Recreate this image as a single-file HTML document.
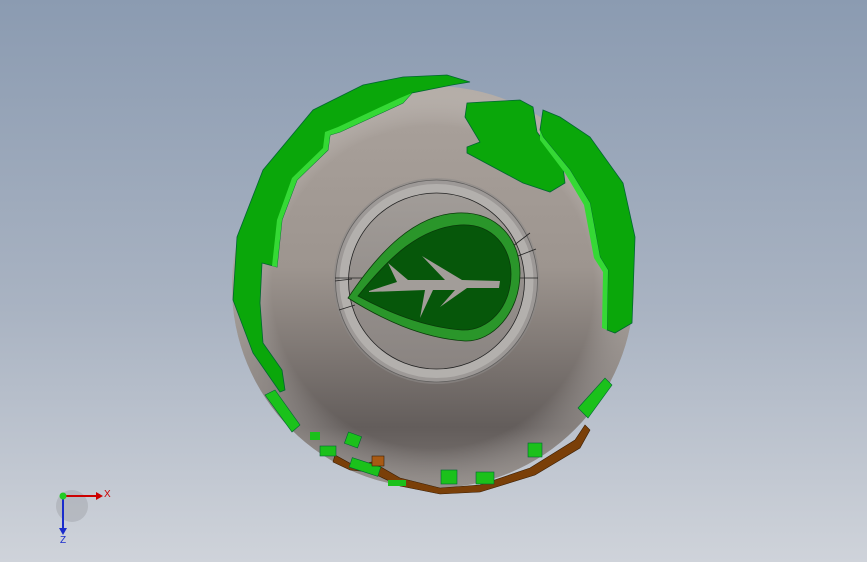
<!DOCTYPE html>
<html><head><style>
html,body{margin:0;padding:0;width:867px;height:562px;overflow:hidden}
body{background:linear-gradient(#8b9bb1 0%,#a9b3c2 55%,#cfd3da 100%)}
svg{position:absolute;left:0;top:0}
</style></head><body>
<svg width="867" height="562" viewBox="0 0 867 562">
<defs>
<linearGradient id="sph" x1="0" y1="0" x2="0" y2="1">
<stop offset="0" stop-color="#aaa29c"/>
<stop offset="0.45" stop-color="#9d958f"/>
<stop offset="0.85" stop-color="#635d5b"/>
<stop offset="1" stop-color="#7d7774"/>
</linearGradient>
<radialGradient id="edge" cx="0.5" cy="0.5" r="0.5">
<stop offset="0.8" stop-color="#fff" stop-opacity="0"/>
<stop offset="1" stop-color="#c8c2bd" stop-opacity="0.35"/>
</radialGradient>
<radialGradient id="ring" cx="0.5" cy="0.5" r="0.5">
<stop offset="0.86" stop-color="#8a8784"/>
<stop offset="0.9" stop-color="#a9a6a3"/>
<stop offset="0.96" stop-color="#b8b6b4"/>
<stop offset="1" stop-color="#9a9896"/>
</radialGradient>
<linearGradient id="inner" x1="0" y1="0" x2="0" y2="1">
<stop offset="0" stop-color="#a19c98"/>
<stop offset="1" stop-color="#8a8481"/>
</linearGradient>
</defs>
<circle cx="433" cy="287" r="201" fill="url(#sph)"/>
<circle cx="433" cy="287" r="201" fill="url(#edge)"/>
<path d="M403,77 L447,75 L470,82 L452,85 L412,93 L403,103 L340,132 L330,135 L328,150 L297,180 L282,220 L277,267 L262,263 L260,303 L263,343 L282,370 L285,390 L280,392 L253,353 L233,300 L237,237 L263,170 L313,110 L363,85 Z" fill="#0aa70a" stroke="#063" stroke-width="0.8"/>
<path d="M412,93 L403,103 L340,132 L330,135 L328,150 L297,180 L282,220 L277,267 L272,266 L277,220 L292,178 L323,148 L325,132 L338,127 L400,98 Z" fill="#35d935"/>
<path d="M467,103 L483,102 L520,100 L533,107 L537,132 L563,167 L565,183 L550,192 L523,183 L467,153 L467,147 L480,142 L465,117 Z" fill="#0aa70a" stroke="#063" stroke-width="0.8"/>
<path d="M543,110 L560,117 L590,137 L623,183 L635,237 L632,323 L615,333 L607,330 L608,270 L600,257 L590,203 L570,170 L543,137 L540,130 Z" fill="#0aa70a" stroke="#063" stroke-width="0.8"/>
<path d="M540,130 L543,137 L570,170 L590,203 L600,257 L608,270 L607,330 L602,328 L603,272 L594,258 L584,205 L565,173 L540,140 Z" fill="#35d935"/>
<path d="M335,455 L355,466 L372,462 L400,478 L440,488 L480,485 L530,468 L575,440 L585,425 L590,430 L580,448 L535,475 L480,492 L440,494 L400,486 L370,472 L350,470 L333,462 Z" fill="#7a3f08" stroke="#3a1e04" stroke-width="0.6"/>
<path d="M265,395 L275,390 L300,425 L292,432 Z" fill="#1bc11b" stroke="#063" stroke-width="0.6"/>
<path d="M578,408 L605,378 L612,385 L588,418 Z" fill="#1bc11b" stroke="#063" stroke-width="0.6"/>
<rect x="346" y="434" width="14" height="12" fill="#1bc11b" stroke="#063" stroke-width="0.6" transform="rotate(20 353 440)"/>
<rect x="320" y="446" width="16" height="10" fill="#1bc11b" stroke="#063" stroke-width="0.6"/>
<rect x="350" y="462" width="30" height="10" fill="#1bc11b" stroke="#063" stroke-width="0.6" transform="rotate(18 365 467)"/>
<rect x="372" y="456" width="12" height="10" fill="#a85a14" stroke="#3a1e04" stroke-width="0.6"/>
<rect x="441" y="470" width="16" height="14" fill="#1bc11b" stroke="#063" stroke-width="0.6"/>
<rect x="476" y="472" width="18" height="12" fill="#1bc11b" stroke="#063" stroke-width="0.6"/>
<rect x="528" y="443" width="14" height="14" fill="#1bc11b" stroke="#063" stroke-width="0.6"/>
<rect x="310" y="432" width="10" height="8" fill="#1bc11b"/>
<rect x="388" y="480" width="18" height="6" fill="#1bc11b"/>
<!-- ring -->
<circle cx="436.5" cy="281" r="101" fill="#b3b0ad" stroke="#222" stroke-width="0.8"/>
<circle cx="436.5" cy="281" r="100" fill="none" stroke="#8e8b88" stroke-width="6" opacity="0.6"/>
<circle cx="436.5" cy="281" r="88" fill="url(#inner)" stroke="#222" stroke-width="0.8"/>
<path d="M335,278 L538,278 M335,281 L352,279 M339,310 L355,305 M513,246 L530,233 M518,256 L536,249" stroke="#222" stroke-width="0.8" fill="none"/>
<!-- leaf -->
<path d="M348,298 C380,250 415,215 457,213 C498,211 520,240 520,273 C520,313 492,342 465,341 C420,338 380,318 348,298 Z" fill="#2a962a" stroke="#0a3a0a" stroke-width="0.8"/>
<path d="M358,296 C390,256 420,228 460,225 C493,223 511,248 511,274 C511,308 488,331 462,330 C423,327 388,312 358,296 Z" fill="#06570a" stroke="#0a3a0a" stroke-width="0.8"/>
<path d="M369,291 L397,282 L388,263 L408,280 L445,280 L422,256 L462,280 L500,281 L499,288 L467,288 L440,307 L455,290 L433,290 L420,318 L425,290 L369,292 Z" fill="#a29d99"/>
<!-- triad -->
<circle cx="72" cy="506" r="16" fill="#a8acb3" opacity="0.6"/>
<line x1="63" y1="496" x2="96" y2="496" stroke="#c00" stroke-width="2"/>
<polygon points="96,492 103,496 96,500" fill="#c00"/>
<line x1="63" y1="496" x2="63" y2="528" stroke="#1a2ccc" stroke-width="2"/>
<polygon points="59,528 63,535 67,528" fill="#1a2ccc"/>
<circle cx="63" cy="496" r="3.5" fill="#2c2"/>
<text x="104" y="497" font-family="Liberation Sans,sans-serif" font-size="10" fill="#c00">X</text>
<text x="60" y="543" font-family="Liberation Sans,sans-serif" font-size="10" fill="#1a2ccc">Z</text>
</svg>
</body></html>
